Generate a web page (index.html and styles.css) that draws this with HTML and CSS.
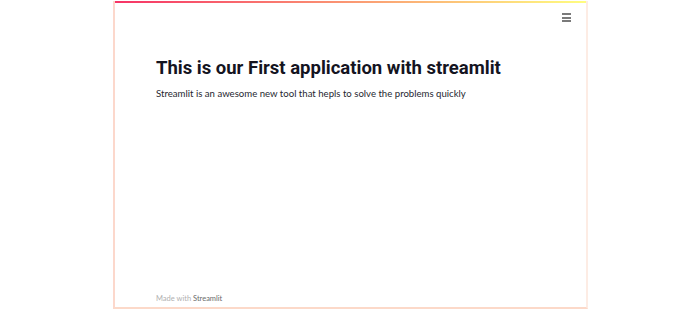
FILE: index.html
```html
<!DOCTYPE html>
<html>
<head>
<meta charset="utf-8">
<link rel="stylesheet" href="styles.css">
</head>
<body>
<div class="frame">
  <div class="decoration"></div>
  <div class="toolbar">
    <span class="menu" aria-label="menu"><i></i><i></i><i></i></span>
  </div>
  <main class="content">
    <h1 class="title">This is our First application with streamlit</h1>
    <p class="text">Streamlit is an awesome new tool that hepls to solve the problems quickly</p>
  </main>
  <footer class="footer">Made with <span class="brand">Streamlit</span></footer>
</div>
</body>
</html>
```
FILE: styles.css
```css
html, body {
  margin: 0;
  padding: 0;
  background: #ffffff;
}
body {
  width: 700px;
  height: 320px;
  font-family: "Lato", "Noto Sans", sans-serif;
}
.frame {
  margin-left: 113px;
  margin-top: 1px;
  width: 471px;
  height: 306px;
  border-left: 2px solid #fcd8cc;
  border-right: 2px solid #fdece4;
  border-bottom: 2px solid #fcd9c9;
  display: flex;
  flex-direction: column;
}
.decoration {
  height: 2px;
  background: linear-gradient(90deg, #f63366, #fffd80);
}
.toolbar {
  display: flex;
  justify-content: flex-end;
  padding: 10px 15px 0 0;
  height: 22px;
}
.menu {
  display: flex;
  flex-direction: column;
  gap: 1.5px;
  width: 9px;
}
.menu i {
  display: block;
  height: 2px;
  background: #7a7a7a;
}
.content {
  flex: 1;
  padding: 20px 0 0 41px;
}
.title {
  margin: 0;
  font-family: "Roboto", "Noto Sans", sans-serif;
  font-size: 18.5px;
  font-weight: 700;
  color: #14141f;
  line-height: 26px;
}
.text {
  margin: 6px 0 0;
  font-size: 9.6px;
  color: #262730;
  line-height: 14px;
}
.footer {
  padding: 0 0 4px 41px;
  font-size: 7.5px;
  color: #b0b0b0;
}
.brand {
  color: #6b6b6b;
}
```
